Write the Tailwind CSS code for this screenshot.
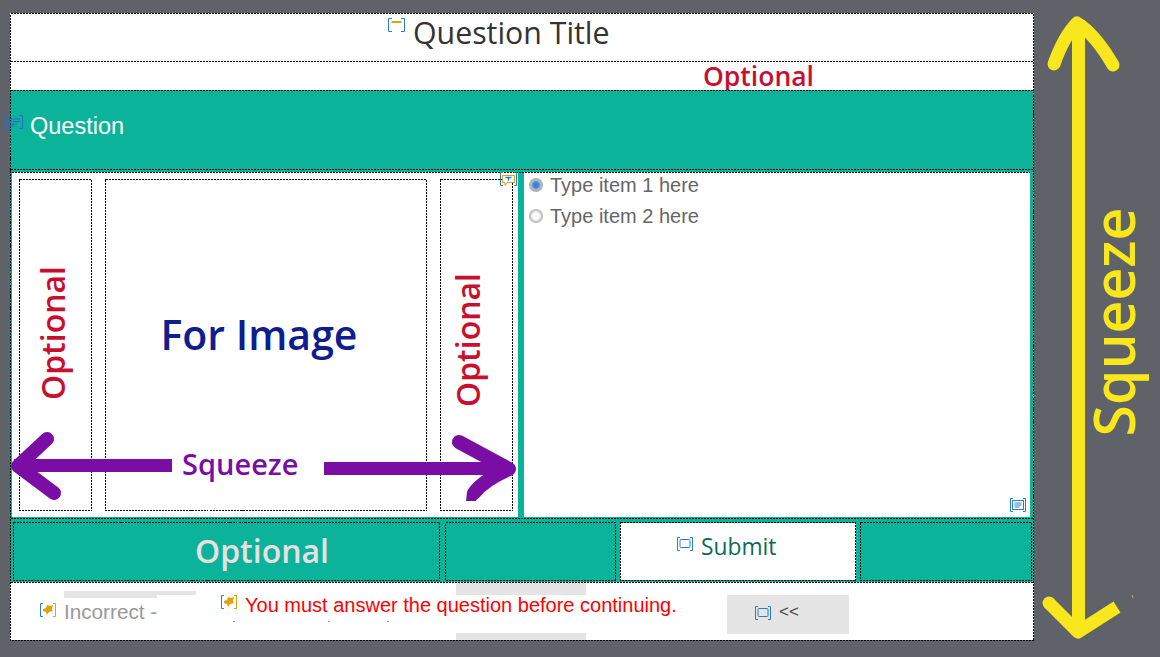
<!DOCTYPE html>
<html lang="en">
  <head>
    <meta charset="UTF-8" />
    <title>Question slide</title>
    <script src="https://cdn.jsdelivr.net/npm/@tailwindcss/browser@4"></script>
  </head>
  <body class="bg-[#5f6269]">
    <div class="relative w-[1160px] h-[657px] overflow-hidden bg-[#5f6269] font-['Open_Sans',sans-serif]">
      <!-- slide -->
      <div class="absolute left-[10px] top-[13px] w-[1024px] h-[627px] flex flex-col bg-white">
        <!-- title -->
        <div class="relative flex-none h-[48px]">
          <span class="absolute left-[403px] top-0 text-[30.300px] leading-[40px] text-[#333]">Question Title</span>
        </div>
        <!-- optional -->
        <div class="relative flex-none h-[29px]">
          <span class="absolute left-[693px] top-[-2px] text-[26.500px] leading-[34px] font-semibold text-[#c8102e]">Optional</span>
        </div>
        <!-- question -->
        <div class="relative flex-none h-[80px] bg-[#0bb39a]">
          <span class="absolute left-[20px] top-[20px] text-[23.500px] leading-[32px] text-white font-['Liberation_Sans',sans-serif]">Question</span>
        </div>
        <!-- image + answers -->
        <div class="flex-none h-[348px] flex gap-[6px] bg-[#0bb39a] pl-[2px] pt-[2px] pb-[1px]">
          <div class="w-[506px] flex gap-[13px] bg-white px-[7px] pt-[7px] pb-[6px]">
            <div class="relative w-[73px]">
              <span class="absolute left-1/2 top-1/2 -translate-x-[calc(50%+2px)] -translate-y-[calc(50%+12px)] -rotate-90 whitespace-nowrap text-[32px] font-semibold text-[#c8102e]">Optional</span>
            </div>
            <div class="relative w-[322px] flex items-center justify-center">
              <span class="-translate-x-[6px] -translate-y-[10px] text-[41px] font-semibold text-[#0f1e8c]">For Image</span>
            </div>
            <div class="relative w-[73px]">
              <span class="absolute left-1/2 top-1/2 -translate-x-[calc(50%+7px)] -translate-y-[calc(50%+5px)] -rotate-90 whitespace-nowrap text-[32px] font-semibold text-[#c8102e]">Optional</span>
            </div>
          </div>
          <div class="w-[506px] bg-white pl-[5px] flex flex-col gap-[4px] font-['Liberation_Sans',sans-serif] text-[20px] leading-[27px] text-[#666]">
            <div class="flex items-center gap-[7px]">
              <span class="w-[14px] h-[14px] -translate-y-px rounded-full bg-[radial-gradient(circle,#2f86de_25%,#b8bcc2_50%,#8f8f8f_100%)]"></span>
              <span>Type item 1 here</span>
            </div>
            <div class="flex items-center gap-[7px]">
              <span class="w-[14px] h-[14px] -translate-y-px rounded-full bg-[radial-gradient(circle,#ffffff_32%,#8f8f8f_85%)]"></span>
              <span>Type item 2 here</span>
            </div>
          </div>
        </div>
        <!-- buttons -->
        <div class="flex-none h-[64px] grid grid-cols-[427px_170px_236px_171px] gap-x-[5px] bg-[#0bb39a] pl-[3px] pt-[5px] pb-[2px]">
          <div class="flex items-center pl-[182px] -translate-y-px text-[32px] font-semibold text-[#e8e0e0]">Optional</div>
          <div></div>
          <div class="bg-white pl-[81px] pt-[7px] text-[22.800px] leading-[34px] text-[#0b6b5c]">Submit</div>
          <div></div>
        </div>
        <!-- feedback -->
        <div class="relative flex-1">
          <div class="absolute left-[54px] top-[9px] w-[93px] h-[7px] bg-[#e5e5e5]"></div>
          <div class="absolute left-[147px] top-[9px] w-[39px] h-[4px] bg-[#e5e5e5]"></div>
          <div class="absolute left-[54px] top-[16px] text-[20.700px] leading-[28px] text-[#999] font-['Liberation_Sans',sans-serif]">Incorrect -</div>
          <div class="absolute left-[446px] top-px w-[130px] h-[12px] bg-[#e5e5e5]"></div>
          <div class="absolute left-[446px] top-[51px] w-[130px] h-[7px] bg-[#e5e5e5]"></div>
          <span class="absolute left-[235px] top-[10px] whitespace-nowrap text-[20px] leading-[26px] text-[#ff0000] font-['Liberation_Sans',sans-serif]">You must answer the question before continuing.</span>
          <div class="absolute left-[223px] top-[39px] w-[2px] h-px bg-[#999]"></div>
          <div class="absolute left-[318px] top-[39px] w-[2px] h-px bg-[#999]"></div>
          <div class="absolute left-[377px] top-[39px] w-[2px] h-px bg-[#999]"></div>
          <div class="absolute left-[717px] top-[13px] w-[122px] h-[39px] bg-[#e5e5e5] pl-[52px] pt-[8px] text-[17px] leading-[18px] text-[#444] font-['Liberation_Sans',sans-serif]">&lt;&lt;</div>
        </div>
      </div>

      <!-- selection outlines of the authoring tool -->
      <svg class="absolute inset-0 pointer-events-none" width="1160" height="657" viewBox="0 0 1160 657" fill="none" shape-rendering="crispEdges">
        <path stroke="#000" stroke-dasharray="2 1"
          d="M10.500 13.500H1033.500V640.500H10.500Z
             M10.500 61.500H1033.500M10.500 90.500H1033.500M10.500 169.500H1033.500
             M12 172.500H1030M10.500 518.500H1033.500M10.500 582.500H1033.500
             M19.500 179.500H91.500V510.500H19.500Z
             M105.500 179.500H426.500V510.500H105.500Z
             M440.500 179.500H512.500V510.500H440.500Z
             M13.500 522.500H439.500V580.500H13.500Z
             M445.500 522.500H615.500V580.500H445.500Z
             M620.500 522.500H855.500V580.500H620.500Z
             M860.500 522.500H1031.500V580.500H860.500Z" />
      </svg>

      <!-- authoring icons, they sit over the slide -->
      <svg class="absolute left-[388px] top-[18px]" width="17" height="14" viewBox="0 0 17 14" fill="none">
        <path d="M4 .5H.5v13H4" stroke="#2a7fc9" /><path d="M13 .5h3.500v13H13" stroke="#2a7fc9" /><path d="M3.500 4h10" stroke="#e3a008" stroke-width="2" />
      </svg>
      <svg class="absolute left-[6px] top-[115px]" width="17" height="14" viewBox="0 0 17 14" fill="none">
        <path d="M4 .5H.5v13H4M13 .5h3.500v13H13" stroke="#2a6fc0" /><path d="M3 4h11M3 6.500h11M3 9h8M3 11h6" stroke="#2a6fc0" />
      </svg>
      <svg class="absolute left-[500px] top-[172px]" width="17" height="15" viewBox="0 0 17 15" fill="none">
        <path d="M3 .5H.5v13H3M14 .5h2.500v13H14" stroke="#2a7fc9" /><path d="M2.500 3.500h12v7H7l-2 3v-3H2.500z" fill="#fff" stroke="#e3a008" /><path d="M5.500 5.500h6M8.500 5.500v3" stroke="#2a7fc9" stroke-width="1.500" />
      </svg>
      <svg class="absolute left-[1010px] top-[498px]" width="16" height="14" viewBox="0 0 16 14" fill="none">
        <path d="M3 .5H.5v13H3M13 .5h2.500v13H13" stroke="#2a7fc9" /><rect x="2.500" y="2.500" width="11" height="9" stroke="#2a7fc9" /><path d="M4.500 5h7M4.500 7h7M4.500 9h5" stroke="#2a7fc9" />
      </svg>
      <svg class="absolute left-[677px] top-[537px]" width="16" height="14" viewBox="0 0 16 14" fill="none">
        <path d="M3 .5H.5v13H3M13 .5h2.500v13H13" stroke="#2a7fc9" /><rect x="3" y="2.500" width="10" height="8" rx="1" stroke="#2a7fc9" />
      </svg>
      <svg class="absolute left-[755px] top-[606px]" width="16" height="14" viewBox="0 0 16 14" fill="none">
        <path d="M3 .5H.5v13H3M13 .5h2.500v13H13" stroke="#2a7fc9" /><rect x="3" y="2.500" width="10" height="8" rx="1" stroke="#2a7fc9" />
      </svg>
      <svg class="absolute left-[40px] top-[603px]" width="16" height="14" viewBox="0 0 16 14" fill="none">
        <path d="M3 .5H.5v13H3" stroke="#2a7fc9" /><path d="M13 .5h2.500v13H13" stroke="#e3a008" /><path d="M3 6l3-1 1-3 3 1 3-1-1 4 1 2-4 1-2 3-1-3-3-1z" fill="#e3a008" />
      </svg>
      <svg class="absolute left-[221px] top-[595px]" width="16" height="14" viewBox="0 0 16 14" fill="none">
        <path d="M3 .5H.5v13H3" stroke="#2a7fc9" /><path d="M13 .5h2.500v13H13" stroke="#e3a008" /><path d="M3 6l3-1 1-3 3 1 3-1-1 4 1 2-4 1-2 3-1-3-3-1z" fill="#e3a008" />
      </svg>

      <!-- hand drawn arrows -->
      <svg class="absolute inset-0 pointer-events-none" width="1160" height="657" viewBox="0 0 1160 657" fill="none">
        <path d="M14 459H172V472H14z" fill="#7a0ea4" />
        <path d="M47 439L18 466L54 493" stroke="#7a0ea4" stroke-width="14" stroke-linecap="round" stroke-linejoin="round" />
        <path d="M324 462H510V475H324z" fill="#7a0ea4" />
        <path d="M459 442L509 469Q484 480 474 493" stroke="#7a0ea4" stroke-width="14" stroke-linecap="round" stroke-linejoin="round" />
        <path d="M467 492L466 501H476L480 490z" fill="#7a0ea4" />
        <path d="M1072 20H1085V634H1072z" fill="#f7e71c" />
        <path d="M1054 64Q1064 36 1077 23Q1095 34 1113 65" stroke="#f7e71c" stroke-width="13" stroke-linecap="round" stroke-linejoin="round" />
        <path d="M1049 603L1078 632L1117 607" stroke="#f7e71c" stroke-width="13" stroke-linejoin="round" />
        <circle cx="1049" cy="603" r="6.500" fill="#f7e71c" />
        <path d="M1132 595l1 3" stroke="#b8b05a" />
      </svg>
      <span class="absolute left-[182px] top-[445px] text-[29px] leading-[38px] font-semibold text-[#7a0ea4]">Squeeze</span>
      <span class="absolute left-[1114px] top-[322px] -translate-x-1/2 -translate-y-1/2 -rotate-90 whitespace-nowrap text-[57px] font-semibold text-[#f7e71c]">Squeeze</span>
    </div>
  </body>
</html>
